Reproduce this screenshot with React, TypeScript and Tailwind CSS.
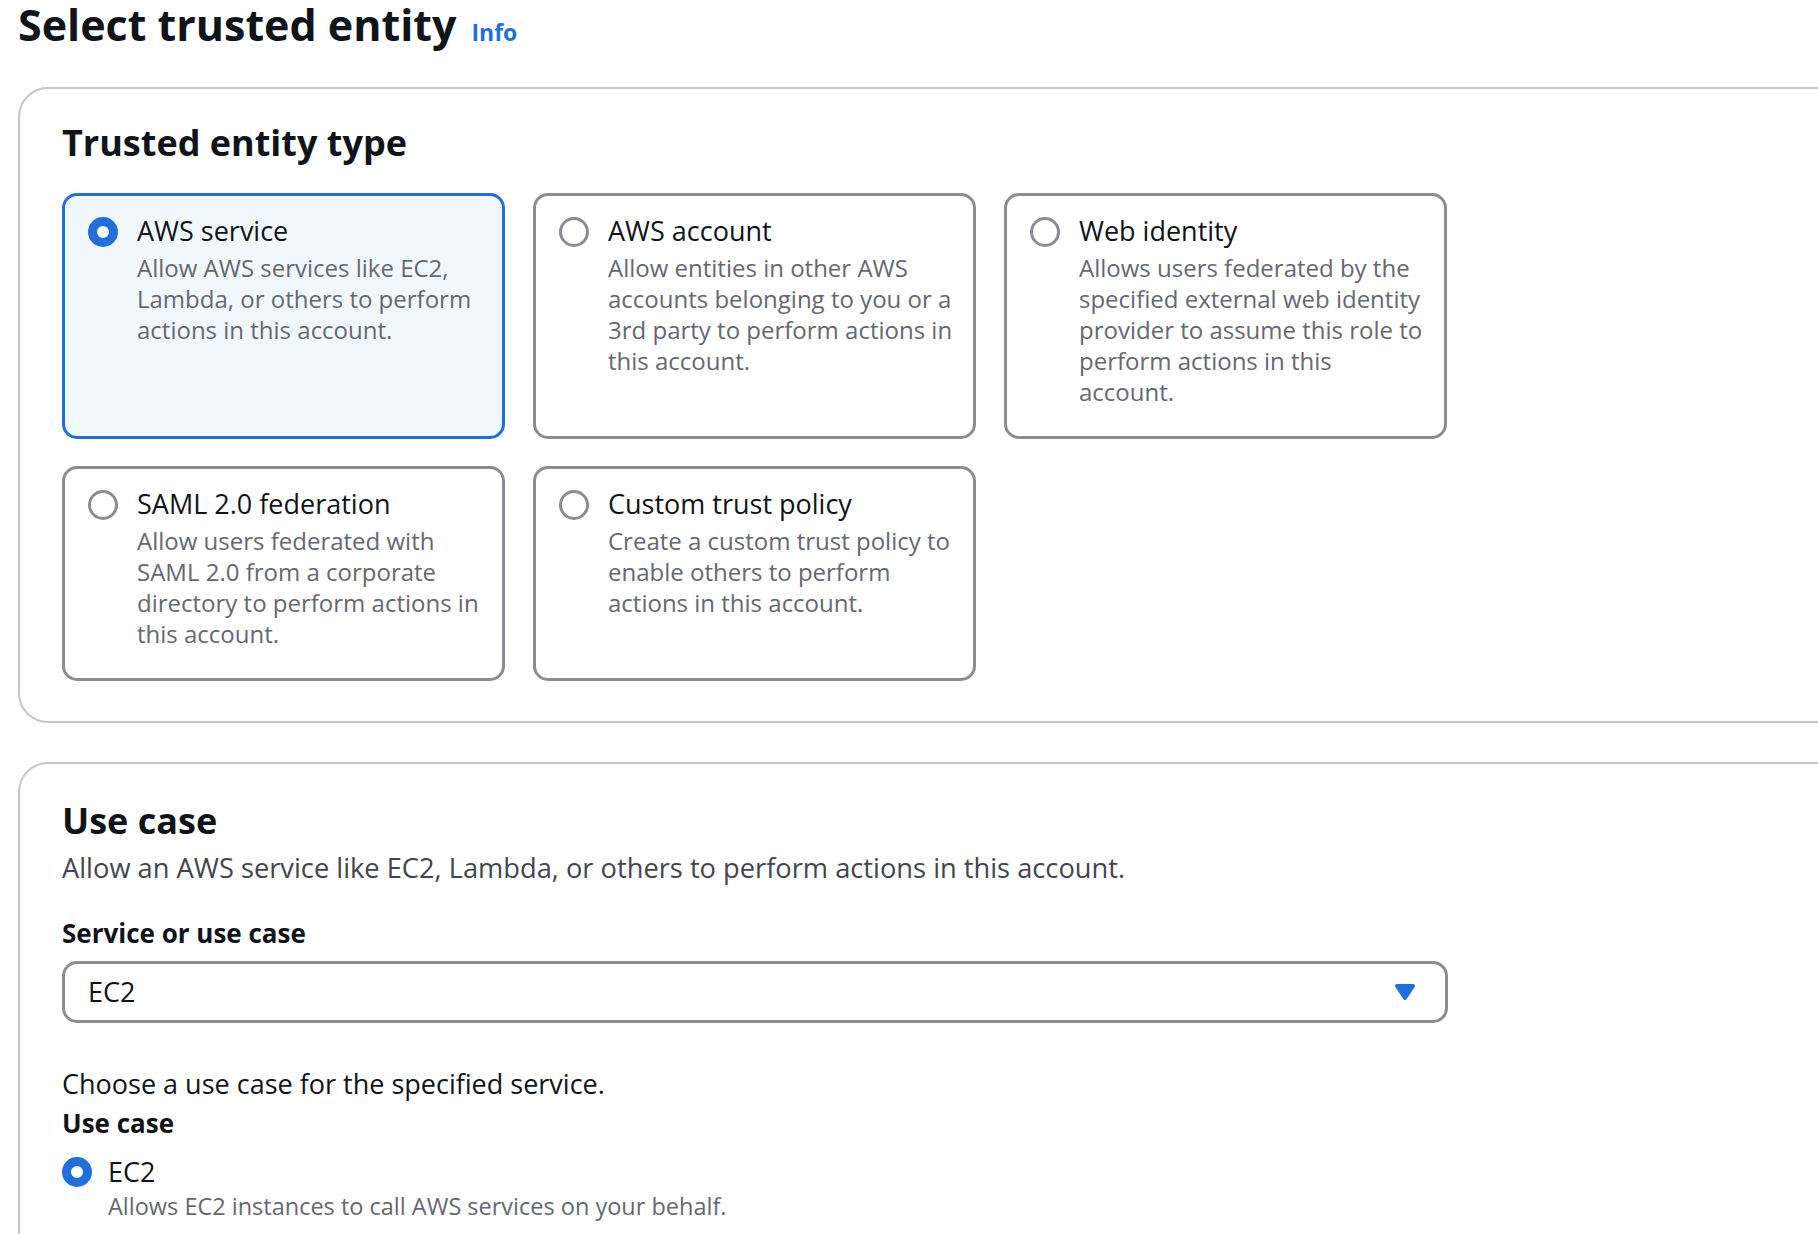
import clsx from 'clsx';

type Tile = {
    title: string;
    description: string;
    selected?: boolean;
};

const ENTITY_TYPES: ReadonlyArray<Tile> = [
    {
        title: 'AWS service',
        description: 'Allow AWS services like EC2, Lambda, or others to perform actions in this account.',
        selected: true,
    },
    {
        title: 'AWS account',
        description: 'Allow entities in other AWS accounts belonging to you or a 3rd party to perform actions in this account.',
    },
    {
        title: 'Web identity',
        description:
            'Allows users federated by the specified external web identity provider to assume this role to perform actions in this account.',
    },
    {
        title: 'SAML 2.0 federation',
        description: 'Allow users federated with SAML 2.0 from a corporate directory to perform actions in this account.',
    },
    {
        title: 'Custom trust policy',
        description: 'Create a custom trust policy to enable others to perform actions in this account.',
    },
];

function Radio({ checked }: { checked?: boolean }) {
    return (
        <span
            className={clsx(
                'block size-[30px] shrink-0 rounded-full bg-white',
                checked ? 'border-[9px] border-[#1f6fdc]' : 'border-[3px] border-[#8c8c94]',
            )}
        />
    );
}

function EntityTile({ tile }: { tile: Tile }) {
    return (
        <label
            className={clsx(
                'flex gap-[19px] rounded-[15px] border-[3px] pt-[18px] pr-[14px] pb-[29px] pl-[23px]',
                tile.selected ? 'border-[#1f6fdc] bg-[#f0f8fe]' : 'border-[#8c8c94] bg-white',
            )}
        >
            <span className="mt-[3px]">
                <Radio checked={tile.selected} />
            </span>
            <span className="flex flex-col">
                <span className="text-[27px] leading-[34px] text-[#0f141a]">{tile.title}</span>
                <span className="mt-[4px] text-[24px] leading-[31px] text-[#656871]">{tile.description}</span>
            </span>
        </label>
    );
}

function CaretDown() {
    return (
        <svg viewBox="0 0 16 16" className="size-[32px] text-[#1f6fdc]" aria-hidden>
            <path d="M4 5h8l-4 6-4-6z" fill="currentColor" stroke="currentColor" strokeWidth="2" strokeLinejoin="round" />
        </svg>
    );
}

export default function App() {
    return (
        <div className="h-[1234px] overflow-hidden bg-white pl-[18px] font-['Open_Sans',sans-serif] text-[#0f141a]">
            <div className="flex items-baseline gap-[15px] pt-[3px]">
                <h1 className="text-[43px] leading-[44px] font-bold">Select trusted entity</h1>
                <a href="#" className="text-[23px] leading-none font-bold text-[#1f6fdc]">
                    Info
                </a>
            </div>

            {/* Trusted entity type */}
            <section className="-mr-[60px] mt-[40px] rounded-[30px] border-2 border-[#c6c6cd] pt-[32px] pb-[40px] pl-[42px]">
                <h2 className="text-[36px] leading-[44px] font-bold">Trusted entity type</h2>
                <div className="mt-[28px] grid w-[1385px] grid-cols-3 gap-x-[28px] gap-y-[27px]">
                    {ENTITY_TYPES.map((tile) => (
                        <EntityTile key={tile.title} tile={tile} />
                    ))}
                </div>
            </section>

            {/* Use case */}
            <section className="-mr-[60px] mt-[39px] rounded-[30px] border-2 border-[#c6c6cd] pt-[35px] pb-[80px] pl-[42px]">
                <h2 className="text-[36px] leading-[44px] font-bold">Use case</h2>
                <p className="mt-[8px] text-[27.25px] leading-[34px] text-[#424650]">
                    Allow an AWS service like EC2, Lambda, or others to perform actions in this account.
                </p>

                <div className="mt-[32px] text-[26px] leading-[32px] font-bold">Service or use case</div>
                <button
                    type="button"
                    className="mt-[12px] flex h-[62px] w-[1386px] items-center justify-between rounded-[15px] border-[3px] border-[#8c8c94] bg-white pr-[24px] pl-[23px]"
                >
                    <span className="text-[27px] leading-[34px]">EC2</span>
                    <CaretDown />
                </button>

                <p className="mt-[44px] text-[27px] leading-[34px]">Choose a use case for the specified service.</p>
                <div className="mt-[6px] text-[26px] leading-[32px] font-bold">Use case</div>
                <div className="mt-[16px] flex items-center gap-[16px]">
                    <Radio checked />
                    <span className="text-[27px] leading-[34px]">EC2</span>
                </div>
                <p className="mt-[3px] pl-[46px] text-[23.5px] leading-[28px] text-[#656871]">
                    Allows EC2 instances to call AWS services on your behalf.
                </p>
            </section>
        </div>
    );
}
